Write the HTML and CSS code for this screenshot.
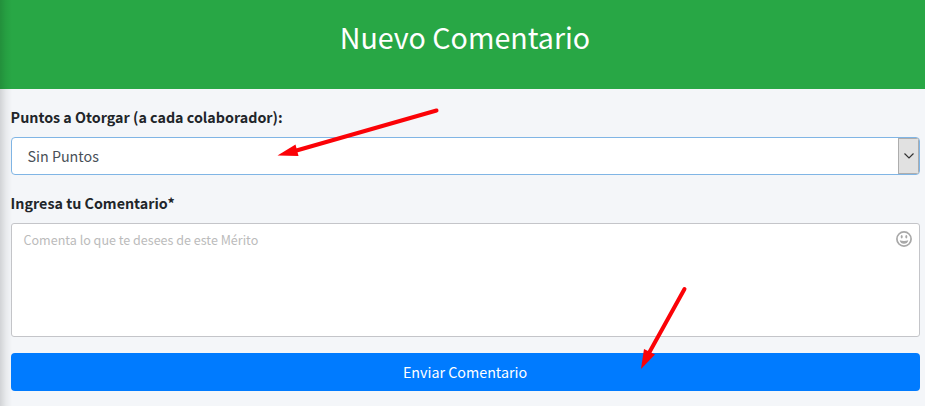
FILE: index.html
```
<!DOCTYPE html>
<html lang="es">
<head>
<meta charset="utf-8">
<title>Nuevo Comentario</title>
<link rel="stylesheet" href="styles.css">
</head>
<body>
<header class="header"><h1 class="title">Nuevo Comentario</h1></header>
<main class="form">
  <div class="label" id="points-label">Puntos a Otorgar (a cada colaborador):</div>
  <div class="select" role="combobox" aria-labelledby="points-label">
    <span class="value">Sin Puntos</span>
    <span class="toggle"><svg width="12" height="8" viewBox="0 0 12 8"><path d="M1.500 1.500 6 6l4.500-4.500" fill="none" stroke="#333" stroke-width="1.200"/></svg></span>
  </div>
  <div class="label comment-label">Ingresa tu Comentario*</div>
  <div class="editor">
    <span class="placeholder">Comenta lo que te desees de este Mérito</span>
    <svg class="smile" width="16" height="16" viewBox="0 0 16 16"><circle cx="8" cy="8" r="7.100" fill="none" stroke="#a8a8a8" stroke-width="1.700"/><ellipse cx="5.700" cy="5.700" rx="1" ry="1.800" fill="#a8a8a8"/><ellipse cx="10.300" cy="5.700" rx="1" ry="1.800" fill="#a8a8a8"/><path d="M3.700 9.200C6.300 10.200 9.700 10.200 12.300 9.200C11.700 14 4.300 14 3.700 9.200Z" fill="#a8a8a8"/></svg>
  </div>
  <button class="submit" type="button">Enviar Comentario</button>
</main>
<div class="edge-shadow"></div>
<svg class="arrows" width="925" height="406" viewBox="0 0 925 406">
  <g stroke="#fb0207" stroke-width="4" stroke-linecap="round"><path d="M436.500 110.500 293 151.500"/><path d="M684.500 289 649 353"/></g>
  <g fill="#fb0207"><path d="M277.500 155.500 295.500 144.500 298.500 156Z"/><path d="M641 369 644 349 655 354.500Z"/></g>
</svg>
</body>
</html>
```
FILE: styles.css
```
* { box-sizing: border-box; }
body {
  margin: 0;
  height: 406px;
  overflow: hidden;
  position: relative;
  background: #f4f6f9;
  color: #212529;
  font-family: "Source Sans Pro", "Noto Sans CJK JP", sans-serif;
  font-size: 14.3px;
}
.header {
  height: 89px;
  padding: 13px 0 0 5px;
  background: #28a745;
  color: #fff;
  text-align: center;
}
.title { margin: 0; font-size: 28.6px; line-height: 48px; font-weight: 400; }
.form { padding: 16px 5px 0 11px; }
.label { height: 24px; line-height: 24px; font-weight: 700; white-space: nowrap; text-indent: -.4px; }
.select {
  display: flex;
  align-items: center;
  justify-content: space-between;
  height: 38px;
  margin-top: 8px;
  padding-left: 15.5px;
  border: 1px solid #80b5e5;
  border-radius: 4px;
  background: #fff;
  color: #495057;
  overflow: hidden;
}
.value { padding-bottom: 2px; }
.toggle {
  display: flex;
  align-items: center;
  justify-content: center;
  width: 21px;
  height: 36px;
  border: 1px solid #adadad;
  background: #e1e1e1;
}
.comment-label { margin-top: 16px; }
.editor {
  display: flex;
  justify-content: space-between;
  height: 114px;
  margin-top: 8px;
  padding: 6px 7px 0 11.5px;
  border: 1px solid #c4c5c9;
  border-radius: 3px;
  background: #fff;
}
.placeholder { color: #bbb; font-size: 12.55px; line-height: 20px; }
.smile { display: block; margin-top: 1px; }
.submit {
  display: block;
  width: 100%;
  height: 38px;
  margin-top: 16px;
  padding: 0 1px 2px 0;
  border: 0;
  border-radius: 4px;
  background: #007bff;
  color: #fff;
  font: inherit;
}
.edge-shadow {
  position: absolute;
  inset: 0 auto 0 0;
  width: 12px;
  background: linear-gradient(to right, rgba(0,0,0,.14), rgba(0,0,0,.05) 50%, transparent);
}
.arrows { position: absolute; top: 0; left: 0; }
```
